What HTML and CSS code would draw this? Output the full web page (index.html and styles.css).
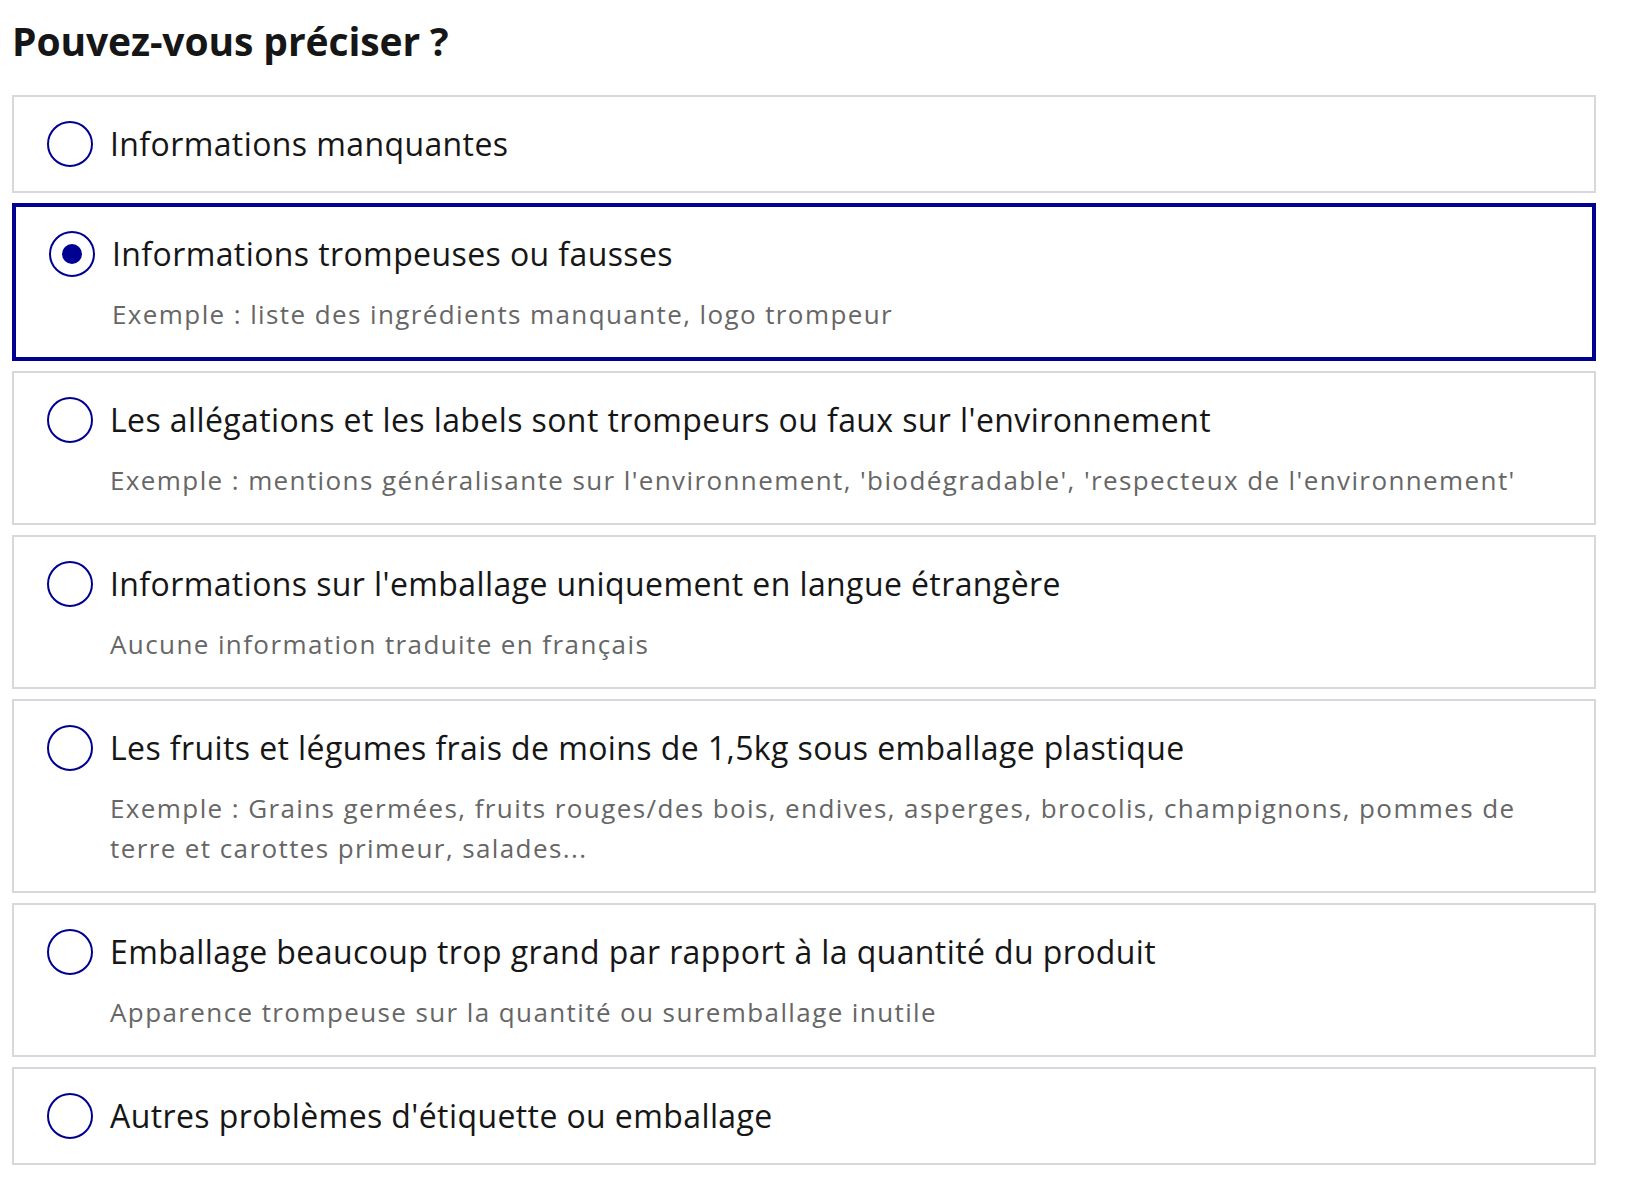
FILE: index.html
```html
<!DOCTYPE html>
<html lang="fr">
<head>
<meta charset="utf-8">
<title>Pouvez-vous préciser ?</title>
<link rel="stylesheet" href="styles.css">
</head>
<body>
<main class="page">
  <h2 class="title">Pouvez-vous préciser ?</h2>
  <div class="options">
    <div class="option">
      <svg class="radio" viewBox="0 0 48 48" width="48" height="48"><circle cx="24" cy="24" r="22" fill="none" stroke="#000091" stroke-width="2"/></svg>
      <div class="text"><div class="label">Informations manquantes</div></div>
    </div>
    <div class="option selected">
      <svg class="radio" viewBox="0 0 48 48" width="48" height="48"><circle cx="24" cy="24" r="22" fill="none" stroke="#000091" stroke-width="2"/><circle cx="24" cy="24" r="10" fill="#000091"/></svg>
      <div class="text"><div class="label">Informations trompeuses ou fausses</div><div class="hint">Exemple : liste des ingrédients manquante, logo trompeur</div></div>
    </div>
    <div class="option">
      <svg class="radio" viewBox="0 0 48 48" width="48" height="48"><circle cx="24" cy="24" r="22" fill="none" stroke="#000091" stroke-width="2"/></svg>
      <div class="text"><div class="label">Les allégations et les labels sont trompeurs ou faux sur l'environnement</div><div class="hint">Exemple : mentions généralisante sur l'environnement, 'biodégradable', 'respecteux de l'environnement'</div></div>
    </div>
    <div class="option">
      <svg class="radio" viewBox="0 0 48 48" width="48" height="48"><circle cx="24" cy="24" r="22" fill="none" stroke="#000091" stroke-width="2"/></svg>
      <div class="text"><div class="label">Informations sur l'emballage uniquement en langue étrangère</div><div class="hint">Aucune information traduite en français</div></div>
    </div>
    <div class="option">
      <svg class="radio" viewBox="0 0 48 48" width="48" height="48"><circle cx="24" cy="24" r="22" fill="none" stroke="#000091" stroke-width="2"/></svg>
      <div class="text"><div class="label">Les fruits et légumes frais de moins de 1,5kg sous emballage plastique</div><div class="hint">Exemple : Grains germées, fruits rouges/des bois, endives, asperges, brocolis, champignons, pommes de terre et carottes primeur, salades...</div></div>
    </div>
    <div class="option">
      <svg class="radio" viewBox="0 0 48 48" width="48" height="48"><circle cx="24" cy="24" r="22" fill="none" stroke="#000091" stroke-width="2"/></svg>
      <div class="text"><div class="label">Emballage beaucoup trop grand par rapport à la quantité du produit</div><div class="hint">Apparence trompeuse sur la quantité ou suremballage inutile</div></div>
    </div>
    <div class="option">
      <svg class="radio" viewBox="0 0 48 48" width="48" height="48"><circle cx="24" cy="24" r="22" fill="none" stroke="#000091" stroke-width="2"/></svg>
      <div class="text"><div class="label">Autres problèmes d'étiquette ou emballage</div></div>
    </div>
  </div>
</main>
</body>
</html>
```

FILE: styles.css
```css
html, body {
  margin: 0;
  padding: 0;
  background: #ffffff;
}

body {
  font-family: "Open Sans", "Noto Sans", "Liberation Sans", sans-serif;
  color: #161616;
}

.page {
  width: 1584px;
  padding: 13px 0 0 12px;
}

.title {
  margin: 0 0 26px 0;
  font-size: 39px;
  line-height: 56px;
  font-weight: 700;
  letter-spacing: -0.1px;
  color: #161616;
}

.options {
  display: flex;
  flex-direction: column;
  gap: 10px;
}

.option {
  display: flex;
  align-items: flex-start;
  gap: 16px;
  border: 2px solid #d8d8dc;
  padding: 23px 32px 23px 32px;
}

.option.selected {
  border: 4px solid #000091;
  padding: 23px 30px 23px 30px;
}

.option.selected .radio {
  margin-left: 2px;
}

.radio {
  flex: none;
  width: 48px;
  height: 48px;
  display: block;
}

.text {
  flex: 1;
  min-width: 0;
  padding-right: 24px;
}

.label {
  font-size: 32px;
  line-height: 48px;
  letter-spacing: 0.4px;
  color: #161616;
}

.hint {
  margin-top: 16px;
  font-size: 26px;
  line-height: 40px;
  letter-spacing: 1.4px;
  color: #666666;
}
```
